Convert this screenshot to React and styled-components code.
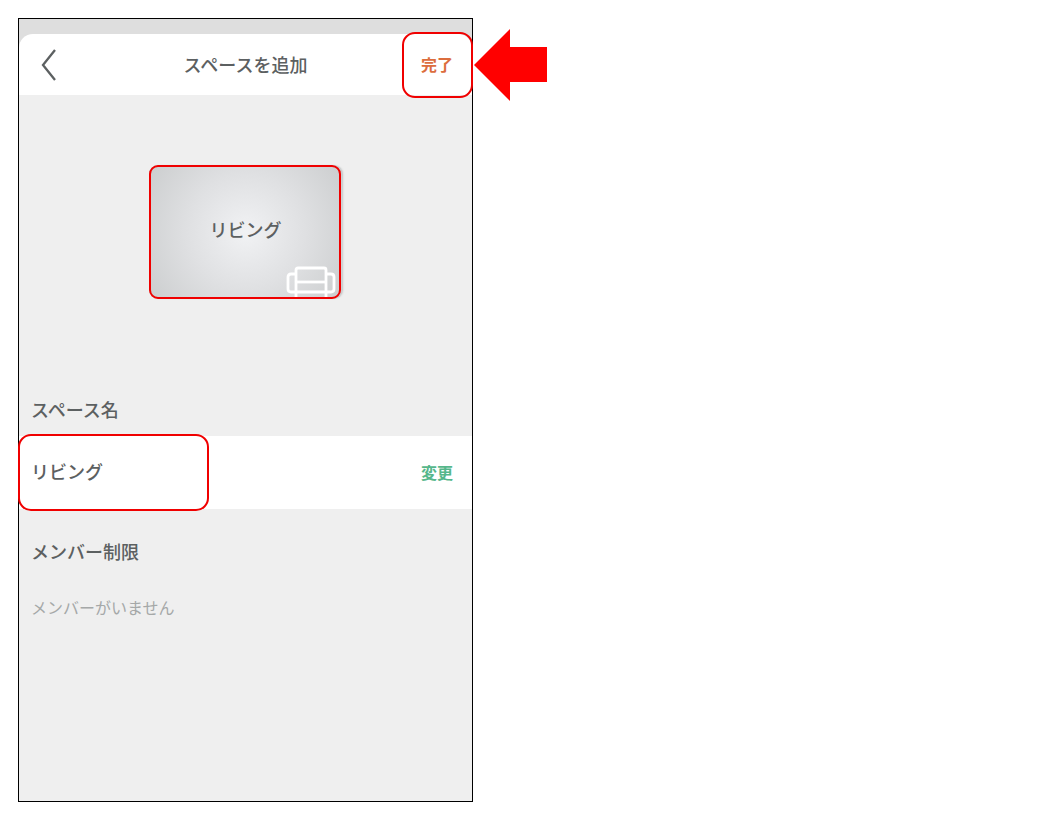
import React from 'react';
import styled, { createGlobalStyle } from 'styled-components';

const GlobalStyle = createGlobalStyle`
    * {
        box-sizing: border-box;
    }

    body {
        margin: 0;
        background-color: #ffffff;
        font-family: 'Noto Sans CJK JP', sans-serif;
        color: #5c6061;
    }

    button {
        padding: 0;
        border: none;
        background: none;
        font-family: inherit;
        cursor: pointer;
    }
`;

const Page = styled.main`
    display: flex;
    align-items: flex-start;
    min-height: 100vh;
    padding: 18px 18px 13px;
`;

const Phone = styled.section`
    flex: 0 1 455px;
    min-height: calc(100vh - 31px);
    border: 1px solid #000000;
    background-color: #efefef;
`;

const StatusBar = styled.div`
    padding-top: 15px;
    background-color: #dedede;
`;

const Header = styled.header`
    display: grid;
    grid-template-columns: 70px 1fr 70px;
    align-items: stretch;
    height: 61px;
    border-radius: 14px 14px 0 0;
    background-color: #ffffff;
`;

const BackButton = styled.button`
    display: flex;
    align-items: center;
    padding-left: 21px;
`;

const Title = styled.h1`
    margin: 0;
    font-size: 18px;
    font-weight: 500;
    line-height: 60px;
    text-align: center;
`;

const TextButton = styled.button`
    padding-bottom: 2px;
    font-size: 16px;
    font-weight: 700;
    line-height: 24px;
    color: ${(props) => props.$color};
`;

/* 赤枠で囲む対象 */
const Marked = styled.div`
    position: relative;
    display: flex;
    align-items: center;
    justify-content: ${(props) => props.$align || 'center'};
    width: ${(props) => props.$width};

    &::after {
        content: '';
        position: absolute;
        inset: ${(props) => props.$inset || '0'};
        border: 2px solid #f00000;
        border-radius: ${(props) => props.$radius || '13px'};
        pointer-events: none;
    }
`;

const Preview = styled.div`
    display: flex;
    justify-content: center;
    padding: 70px 0 98px;
`;

const SpaceCard = styled.div`
    display: flex;
    align-items: center;
    justify-content: center;
    position: relative;
    width: 194px;
    height: 134px;
    border-radius: 9px;
    background: radial-gradient(circle at center, #f1f2f4 0, #dfe0e2 50%, #cbcdce 100%);
    box-shadow: 1px 0 2px -1px #c4c5c6;
    font-size: 18px;
    font-weight: 500;
    line-height: 24px;
    padding-bottom: 6px;
`;

const SofaIcon = styled.svg`
    position: absolute;
    right: 7px;
    bottom: 2px;
`;

const SectionTitle = styled.h2`
    margin: 0;
    padding: 0 12px;
    font-size: 18px;
    font-weight: 500;
    line-height: 24px;
`;

const NameRow = styled.div`
    display: flex;
    align-items: stretch;
    justify-content: space-between;
    height: 73px;
    margin: 15px 0 30px;
    padding-right: 19px;
    background-color: #ffffff;
`;

const SpaceName = styled.span`
    padding: 0 0 4px 12px;
    font-size: 18px;
    font-weight: 500;
    line-height: 24px;
`;

const EmptyText = styled.p`
    margin: 32px 0 0;
    padding: 0 12px;
    font-size: 16px;
    line-height: 24px;
    color: #a5a8a8;
`;

const Arrow = styled.svg`
    flex: none;
    margin: 11px 0 0 1px;
`;

export default () => {
    const spaceName = 'リビング';

    return (
        <>
            <GlobalStyle />
            <Page>
                <Phone>
                    <StatusBar>
                        <Header>
                            <BackButton aria-label="戻る">
                                <svg width="18" height="34" viewBox="0 0 18 34" fill="none">
                                    <path d="M15 2 3 17l12 15" stroke="#5c6061" strokeWidth="2.3" />
                                </svg>
                            </BackButton>
                            <Title>スペースを追加</Title>
                            <Marked $inset="-2px -1px -3px 0">
                                <TextButton $color="#dc6d3d">完了</TextButton>
                            </Marked>
                        </Header>
                    </StatusBar>

                    <Preview>
                        <Marked $radius="9px" $inset="0 2px 0 0">
                            <SpaceCard>
                                {spaceName}
                                <SofaIcon
                                    width="50"
                                    height="31"
                                    viewBox="0 0 50 31"
                                    fill="none"
                                    stroke="#ffffff"
                                    strokeWidth="2.8"
                                >
                                    <path d="M10 31V4q0-2 2-2h26q2 0 2 2v27" />
                                    <path d="M10 8H5Q2 8 2 11v12q0 3 3 3h40q3 0 3-3V11q0-3-3-3h-5" />
                                    <path d="M10 16h30" />
                                </SofaIcon>
                            </SpaceCard>
                        </Marked>
                    </Preview>

                    <SectionTitle>スペース名</SectionTitle>
                    <NameRow>
                        <Marked $width="190px" $align="flex-start" $inset="-2px 0 -2px -1px">
                            <SpaceName>{spaceName}</SpaceName>
                        </Marked>
                        <TextButton $color="#56b78b">変更</TextButton>
                    </NameRow>

                    <SectionTitle>メンバー制限</SectionTitle>
                    <EmptyText>メンバーがいません</EmptyText>
                </Phone>

                <Arrow width="73" height="72" viewBox="0 0 73 72" aria-hidden="true">
                    <path d="M0 36 36 0v18h37v35H36v19z" fill="#ff0000" />
                </Arrow>
            </Page>
        </>
    );
};
